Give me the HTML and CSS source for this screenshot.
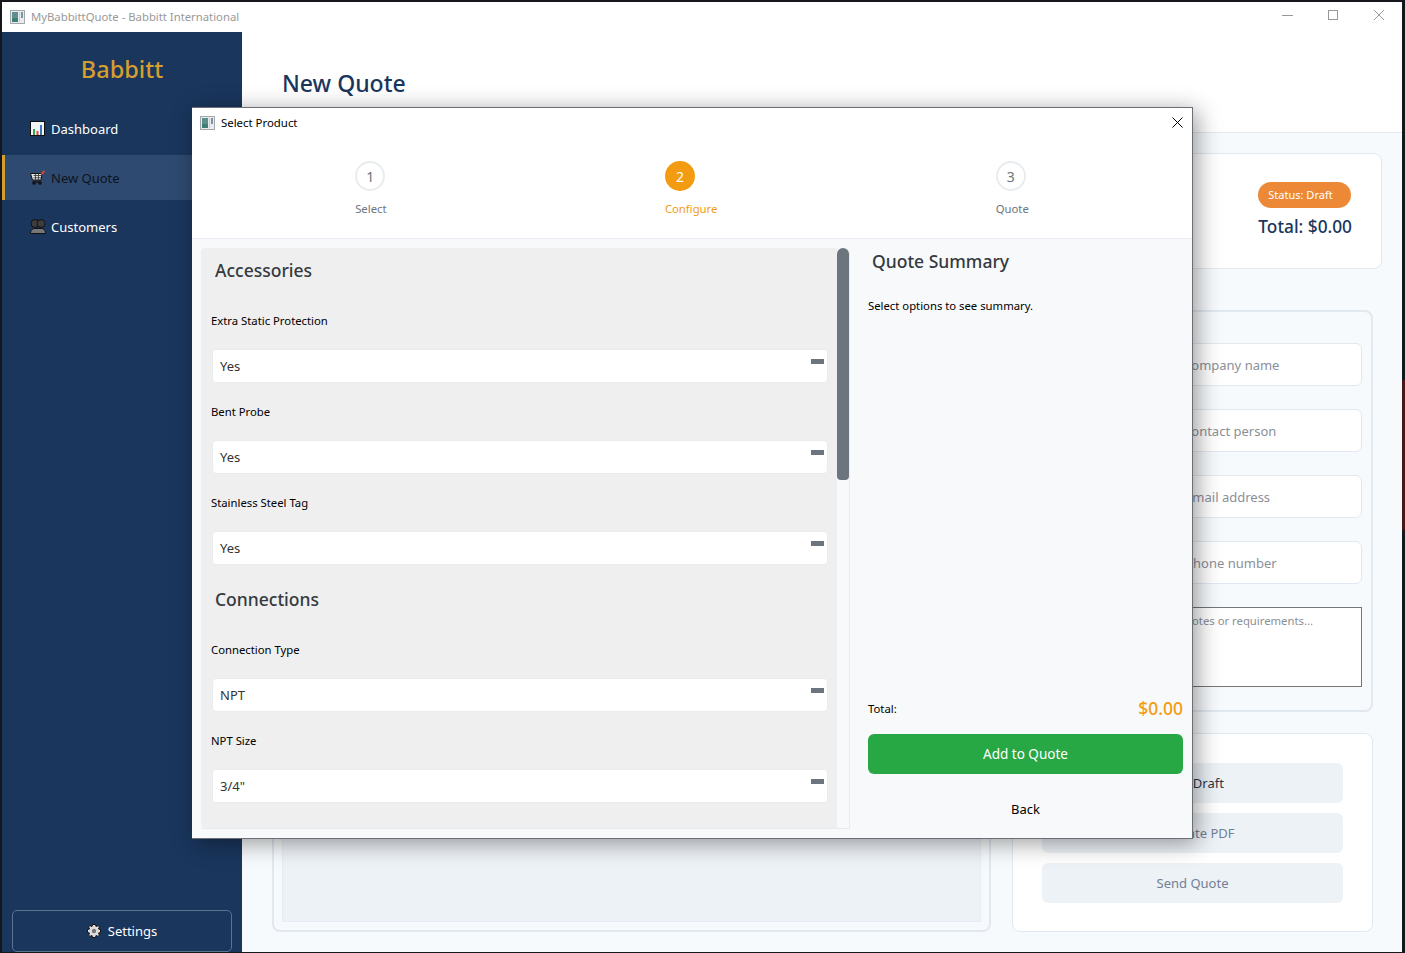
FILE: index.html
```html
<!DOCTYPE html>
<html lang="en">

<head>
    <meta charset="UTF-8">
    <meta name="viewport" content="width=device-width, initial-scale=1.0">
    <title>MyBabbittQuote - Babbitt International</title>
    <link rel="stylesheet" href="styles.css">
</head>

<body>

    <div class="window">
        <div class="titlebar">
            <svg class="app-icon" viewBox="0 0 15 14"><rect x="0.5" y="0.5" width="14" height="13" fill="#e9ecee" stroke="#a3a8ab"/><rect x="2" y="2" width="6" height="10" fill="#5f8f8c"/><rect x="2" y="8" width="6" height="4" fill="#3f7f74"/><rect x="9" y="2" width="1" height="10" fill="#c5ced3"/><rect x="11" y="2" width="2" height="6" fill="#7c95a6"/></svg>
            <span class="titlebar-text">MyBabbittQuote - Babbitt International</span>
            <div class="win-controls">
                <svg viewBox="0 0 12 12"><path d="M1 6.500H12" stroke="#999" fill="none"/></svg>
                <svg viewBox="0 0 12 12"><rect x="1.500" y="1.500" width="9" height="9" stroke="#999" fill="none"/></svg>
                <svg viewBox="0 0 12 12"><path d="M1 1L11 11M11 1L1 11" stroke="#999" fill="none"/></svg>
            </div>
        </div>

        <div class="app">
            <aside class="sidebar">
                <div class="brand">Babbitt</div>
                <nav class="nav">
                    <a class="nav-item" href="#">
                        <svg class="nav-icon" viewBox="0 0 16 15"><rect x="0.500" y="0.500" width="14" height="14" fill="#f4f4f4" stroke="#111"/><rect x="3" y="8" width="2" height="6" fill="#2fa84f"/><rect x="6.500" y="10" width="2" height="4" fill="#e2492f"/><rect x="10" y="4" width="2" height="10" fill="#3a76c4"/></svg>
                        Dashboard
                    </a>
                    <a class="nav-item active" href="#">
                        <svg class="nav-icon" viewBox="0 0 16 15"><path d="M0.500 3.500H12L11 10H2.500Z" fill="#e4e4e4" stroke="#111"/><path d="M3.500 5.500H11.500M3.500 7.800H11M5.500 3.500V10M8.500 3.500V10" stroke="#333" stroke-width="0.800"/><path d="M2.500 12H11.500" stroke="#111" stroke-width="1.400"/><path d="M11.500 4L14.500 1" stroke="#d8442f" stroke-width="2"/><circle cx="4" cy="13.300" r="1.500" fill="#111"/><circle cx="10" cy="13.300" r="1.500" fill="#111"/></svg>
                        New Quote
                    </a>
                    <a class="nav-item" href="#">
                        <svg class="nav-icon" viewBox="0 0 16 15"><circle cx="5" cy="4.500" r="4" fill="#3d3d3d" stroke="#111"/><circle cx="11" cy="4.500" r="4" fill="#3d3d3d" stroke="#111"/><path d="M0.500 14.500C0.500 10.500 3 9.500 5 9.500H11C13 9.500 15.500 10.500 15.500 14.500Z" fill="#777" stroke="#111"/></svg>
                        Customers
                    </a>
                </nav>
                <button class="settings-btn">
                    <svg class="gear" viewBox="0 0 14 14"><path d="M5.500 0.500H8.500L9 2.500L11 1.600L12.400 3L11.500 5L13.500 5.500V8.500L11.500 9L12.400 11L11 12.400L9 11.500L8.500 13.500H5.500L5 11.500L3 12.400L1.600 11L2.500 9L0.500 8.500V5.500L2.500 5L1.600 3L3 1.600L5 2.500Z" fill="#ddd" stroke="#111"/><circle cx="7" cy="7" r="2.200" fill="#777"/></svg>
                    Settings
                </button>
            </aside>

            <main class="main">
                <header class="page-header">
                    <h1>New Quote</h1>
                </header>
                <div class="page-body">
                    <div class="status-card">
                        <div class="status-col">
                            <span class="status-pill">Status: Draft</span>
                            <span class="status-total">Total: $0.00</span>
                        </div>
                    </div>
                    <div class="customer-box">
                        <input class="field" placeholder="Enter company name">
                        <input class="field" placeholder="Enter contact person">
                        <input class="field" placeholder="Enter email address">
                        <input class="field" placeholder="Enter phone number">
                        <textarea class="notes" placeholder="Additional notes or requirements..."></textarea>
                    </div>
                    <div class="bottom-row">
                        <div class="items-box">
                            <div class="items-empty"></div>
                        </div>
                        <div class="actions-box">
                            <button class="action-btn primary">Save Draft</button>
                            <button class="action-btn">Generate PDF</button>
                            <button class="action-btn">Send Quote</button>
                        </div>
                    </div>
                </div>
            </main>
        </div>
    </div>

    <!-- Select Product dialog -->
    <div class="dialog">
        <div class="dialog-title">
            <svg class="app-icon" viewBox="0 0 15 14"><rect x="0.5" y="0.5" width="14" height="13" fill="#e9ecee" stroke="#a3a8ab"/><rect x="2" y="2" width="6" height="10" fill="#5f8f8c"/><rect x="2" y="8" width="6" height="4" fill="#3f7f74"/><rect x="9" y="2" width="1" height="10" fill="#c5ced3"/><rect x="11" y="2" width="2" height="6" fill="#7c95a6"/></svg>
            <span>Select Product</span>
            <svg class="dialog-close" viewBox="0 0 11 11"><path d="M0.500 0.500L10.500 10.500M10.500 0.500L0.500 10.500" stroke="#000" fill="none"/></svg>
        </div>

        <div class="stepper">
            <div class="step">
                <div class="step-circle">1</div>
                <div class="step-label">Select</div>
            </div>
            <div class="step current">
                <div class="step-circle">2</div>
                <div class="step-label">Configure</div>
            </div>
            <div class="step">
                <div class="step-circle">3</div>
                <div class="step-label">Quote</div>
            </div>
        </div>

        <div class="dialog-body">
            <div class="options-panel">
                <div class="options-scroll">
                    <h2 class="group-title">Accessories</h2>
                    <div class="option">
                        <label>Extra Static Protection</label>
                        <div class="select">Yes<span class="select-arrow"></span></div>
                    </div>
                    <div class="option">
                        <label>Bent Probe</label>
                        <div class="select">Yes<span class="select-arrow"></span></div>
                    </div>
                    <div class="option">
                        <label>Stainless Steel Tag</label>
                        <div class="select">Yes<span class="select-arrow"></span></div>
                    </div>
                    <h2 class="group-title">Connections</h2>
                    <div class="option">
                        <label>Connection Type</label>
                        <div class="select">NPT<span class="select-arrow"></span></div>
                    </div>
                    <div class="option">
                        <label>NPT Size</label>
                        <div class="select">3/4"<span class="select-arrow"></span></div>
                    </div>
                    <div class="option">
                        <label>Flange Type</label>
                    </div>
                </div>
                <div class="scrollbar"><div class="scroll-thumb"></div></div>
            </div>

            <div class="summary">
                <h2 class="summary-title">Quote Summary</h2>
                <p class="summary-text">Select options to see summary.</p>
                <div class="summary-total">
                    <span>Total:</span>
                    <span class="summary-price">$0.00</span>
                </div>
                <button class="add-btn">Add to Quote</button>
                <button class="back-btn">Back</button>
            </div>
        </div>
    </div>

</body>

</html>
```

FILE: styles.css
```css
* {
    box-sizing: border-box;
}

body {
    font-family: 'Noto Sans', sans-serif;
    margin: 0;
    width: 1405px;
    height: 953px;
    overflow: hidden;
    position: relative;
    /* what shows of the desktop past the window's right edge */
    background: linear-gradient(#15171c 380px, #4a1616 380px, #4a1616 530px, #15171c 530px) right / 3px 100% no-repeat, #15171c;
    padding: 2px 3px 1px 2px;
}

button {
    font-family: inherit;
}

.window {
    height: 100%;
    display: flex;
    flex-direction: column;
    background-color: #fff;
}

.titlebar {
    height: 30px;
    flex: none;
    display: flex;
    align-items: center;
    padding: 0 0 1px 8px;
    background-color: #fff;
    font-size: 11.300px;
    color: #999;
}

.app-icon {
    width: 15px;
    height: 14px;
    flex: none;
}

.titlebar-text {
    margin-left: 6px;
}

.win-controls {
    margin-left: auto;
    display: flex;
    gap: 34px;
    padding-right: 17px;
    margin-top: -3px;
}

.win-controls svg {
    width: 12px;
    height: 12px;
}

.app {
    flex: 1;
    display: flex;
    min-height: 0;
}

/* sidebar */
.sidebar {
    width: 240px;
    flex: none;
    display: flex;
    flex-direction: column;
    background-color: #1a365d;
}

.brand {
    height: 74px;
    padding-top: 19px;
    text-align: center;
    font-size: 23.500px;
    font-weight: 500;
    line-height: 36px;
    color: #d69e2e;
}

.nav {
    display: flex;
    flex-direction: column;
    gap: 4px;
}

.nav-item {
    height: 45px;
    display: flex;
    align-items: center;
    gap: 5px;
    padding-left: 28px;
    font-size: 13px;
    color: #fff;
    text-decoration: none;
}

.nav-item.active {
    padding-left: 25px;
    border-left: 3px solid #d69e2e;
    background-color: #2f4a70;
    color: #0e1420;
}

.nav-icon {
    width: 16px;
    height: 15px;
    flex: none;
}

.settings-btn {
    margin: auto 10px 0;
    height: 42px;
    display: flex;
    align-items: center;
    justify-content: center;
    gap: 7px;
    background: none;
    border: 1px solid #5c7291;
    border-radius: 5px;
    font-size: 13px;
    color: #fff;
}

.gear {
    width: 14px;
    height: 14px;
}

/* main area behind the dialog */
.main {
    flex: 1;
    min-width: 0;
    display: flex;
    flex-direction: column;
}

.page-header {
    height: 101px;
    flex: none;
    padding: 34px 0 0 40px;
    background-color: #fff;
    border-bottom: 1px solid #e2e8f0;
}

.page-header h1 {
    margin: 0;
    font-size: 23px;
    font-weight: 500;
    line-height: 34px;
    color: #1a365d;
}

.page-body {
    flex: 1;
    padding: 20px 20px 18px 20px;
    background-color: #f7fafc;
}

.status-card {
    height: 116px;
    display: flex;
    justify-content: flex-end;
    align-items: center;
    padding-right: 29px;
    background-color: #fff;
    border: 1px solid #e2e8f0;
    border-radius: 8px;
}

.status-col {
    display: flex;
    flex-direction: column;
    align-items: flex-start;
    gap: 6px;
}

.status-pill {
    width: 93px;
    height: 26px;
    padding-left: 10px;
    border-radius: 13px;
    background-color: #ed8936;
    font-size: 11px;
    line-height: 26px;
    color: #fff;
}

.status-total {
    font-size: 17.300px;
    font-weight: 500;
    line-height: 26px;
    color: #1a365d;
}

.customer-box {
    height: 402px;
    margin: 41px 9px 0 10px;
    display: flex;
    flex-direction: column;
    align-items: flex-end;
    gap: 23px;
    padding: 31px 9px 0 0;
    border: 2px solid #e2e8f0;
    border-radius: 8px;
}

.field {
    width: 226px;
    height: 43px;
    flex: none;
    padding: 0 12px;
    background-color: #fff;
    border: 1px solid #e2e8f0;
    border-radius: 6px;
    font-family: inherit;
    font-size: 13px;
}

.field::placeholder,
.notes::placeholder {
    color: #8b8f98;
    opacity: 1;
}

.notes {
    width: 243px;
    height: 80px;
    flex: none;
    padding: 5px 8px;
    background-color: #fff;
    border: 1px solid #767676;
    font-family: inherit;
    font-size: 11.300px;
    resize: none;
}

.bottom-row {
    display: flex;
    gap: 21px;
    height: 199px;
    margin: 21px 9px 0 10px;
}

.items-box {
    flex: 1;
    padding: 8px;
    border: 2px solid #e2e8f0;
    border-radius: 8px;
}

.items-empty {
    height: 100%;
    background-color: #edf2f7;
    border: 1px dotted #e2e8f0;
}

.actions-box {
    width: 361px;
    flex: none;
    display: flex;
    flex-direction: column;
    gap: 10px;
    padding: 29px 29px 0;
    background-color: #fff;
    border: 1px solid #e2e8f0;
    border-radius: 8px;
}

.action-btn {
    height: 40px;
    flex: none;
    background-color: #edf2f7;
    border: none;
    border-radius: 6px;
    font-size: 13px;
    color: #718096;
}

.action-btn.primary {
    color: #2d3748;
}

/* dialog */
.dialog {
    position: absolute;
    left: 192px;
    top: 107px;
    width: 1001px;
    height: 732px;
    display: flex;
    flex-direction: column;
    background-color: #fff;
    border: 1px solid #6b6f75;
    border-left: none;
    box-shadow: 4px 4px 22px rgba(0, 0, 0, 0.4);
}

.dialog-title {
    height: 29px;
    flex: none;
    display: flex;
    align-items: center;
    gap: 6px;
    padding-left: 8px;
    font-size: 11.400px;
    color: #000;
}

.dialog-close {
    width: 11px;
    height: 11px;
    margin-left: auto;
    margin-right: 9px;
}

.stepper {
    height: 102px;
    flex: none;
    display: flex;
    justify-content: space-around;
    padding: 24px 24px 0;
    border-bottom: 1px solid #e9edf2;
}

.step {
    display: flex;
    flex-direction: column;
    align-items: flex-start;
}

.step-circle {
    width: 30px;
    height: 30px;
    display: flex;
    align-items: center;
    justify-content: center;
    border: 2px solid #e9ecef;
    border-radius: 50%;
    font-size: 14px;
    color: #6c757d;
}

.step-label {
    margin-top: 10px;
    font-size: 11.300px;
    line-height: 16px;
    color: #6c757d;
}

.step.current .step-circle {
    background-color: #f39c12;
    border-color: #f39c12;
    color: #fff;
}

.step.current .step-label {
    color: #f39c12;
}

.dialog-body {
    flex: 1;
    min-height: 0;
    display: flex;
    background-color: #f8f9fa;
    padding: 9px 9px 9px 9px;
}

.options-panel {
    width: 649px;
    flex: none;
    display: flex;
    border-right: 1px solid #e9ecef;
    border-bottom: 1px solid #e9ecef;
    border-radius: 6px 6px 0 0;
}

.options-scroll {
    flex: 1;
    overflow: hidden;
    padding: 0 9px 0 10px;
    background-color: #efefef;
    border-radius: 4px 0 0 4px;
}

.group-title {
    margin: 9px 0 0 4px;
    font-size: 17.500px;
    font-weight: 500;
    line-height: 26px;
    color: #343a40;
}

.option {
    padding-top: 20px;
}

.group-title + .option {
    padding-top: 29px;
}

.option label {
    display: block;
    font-size: 11.300px;
    line-height: 18px;
    color: #000;
}

.select {
    position: relative;
    height: 34px;
    margin: 19px 0 0 1px;
    padding-left: 7px;
    background-color: #fff;
    border: 1px solid #e9ecef;
    border-radius: 4px;
    font-size: 13px;
    line-height: 33px;
    color: #333;
}

.select-arrow {
    position: absolute;
    right: 3px;
    top: 9px;
    width: 13px;
    height: 5px;
    background-color: #6c757d;
}

.option + .group-title {
    margin-top: 21px;
}

.scrollbar {
    width: 12px;
    flex: none;
}

.scroll-thumb {
    height: 232px;
    background-color: #6c757d;
    border-radius: 6px 6px 4px 4px;
}

.summary {
    flex: 1;
    display: flex;
    flex-direction: column;
    padding-left: 18px;
}

.summary-title {
    margin: 0 0 0 4px;
    font-size: 17.500px;
    font-weight: 500;
    line-height: 26px;
    color: #343a40;
}

.summary-text {
    margin: 23px 0 0;
    font-size: 11.300px;
    line-height: 18px;
    color: #000;
}

.summary-total {
    margin-top: auto;
    display: flex;
    justify-content: space-between;
    align-items: center;
    font-size: 11.300px;
    color: #000;
}

.summary-price {
    font-size: 17.500px;
    font-weight: 500;
    color: #f39c12;
}

.add-btn {
    height: 40px;
    margin-top: 14px;
    background-color: #28a745;
    border: none;
    border-radius: 6px;
    font-size: 13.500px;
    color: #fff;
}

.back-btn {
    height: 40px;
    margin-top: 15px;
    background: none;
    border: none;
    font-size: 13px;
    color: #000;
}
```
